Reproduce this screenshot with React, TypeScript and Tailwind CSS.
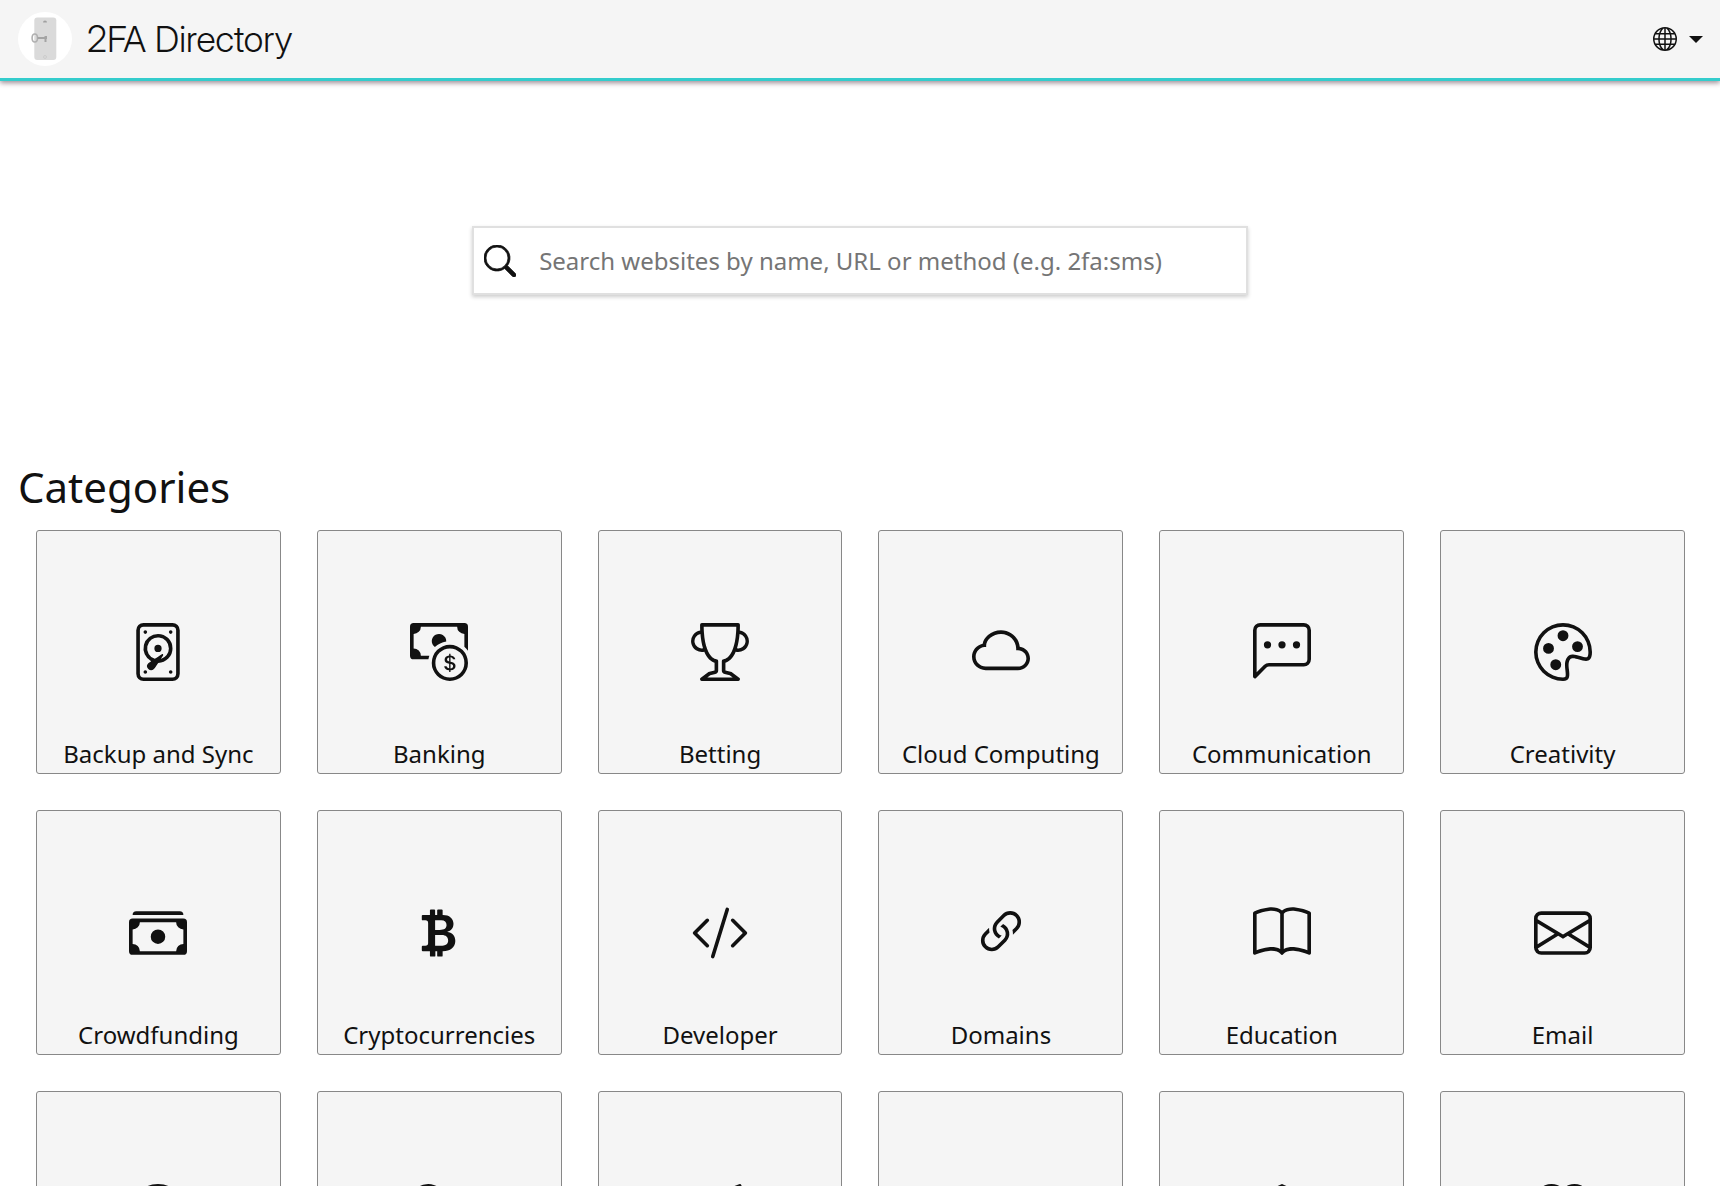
import type { IconType } from "react-icons";
import {
  BsBank,
  BsBook,
  BsCashCoin,
  BsCashStack,
  BsChatLeftDots,
  BsCloud,
  BsCodeSlash,
  BsController,
  BsCupStraw,
  BsCurrencyBitcoin,
  BsCurrencyExchange,
  BsDeviceHdd,
  BsEnvelope,
  BsGlobe,
  BsHeartPulse,
  BsLink45Deg,
  BsPalette,
  BsPlayCircle,
  BsSearch,
  BsTrophy,
} from "react-icons/bs";

type Category = { name: string; icon: IconType };

const categories: Category[] = [
  { name: "Backup and Sync", icon: BsDeviceHdd },
  { name: "Banking", icon: BsCashCoin },
  { name: "Betting", icon: BsTrophy },
  { name: "Cloud Computing", icon: BsCloud },
  { name: "Communication", icon: BsChatLeftDots },
  { name: "Creativity", icon: BsPalette },
  { name: "Crowdfunding", icon: BsCashStack },
  { name: "Cryptocurrencies", icon: BsCurrencyBitcoin },
  { name: "Developer", icon: BsCodeSlash },
  { name: "Domains", icon: BsLink45Deg },
  { name: "Education", icon: BsBook },
  { name: "Email", icon: BsEnvelope },
  { name: "Entertainment", icon: BsPlayCircle },
  { name: "Finance", icon: BsCurrencyExchange },
  { name: "Food", icon: BsCupStraw },
  { name: "Gaming", icon: BsController },
  { name: "Government", icon: BsBank },
  { name: "Health", icon: BsHeartPulse },
];

function Logo() {
  return (
    <svg viewBox="0 0 54 54" className="size-[54px]" aria-hidden="true">
      <circle cx="27" cy="27" r="27" fill="#fff" />
      <rect x="16.3" y="5.5" width="22" height="42.5" rx="3" fill="#dadada" />
      <path d="M25 10.5a2 2 0 0 1 4 0z" fill="#a0a0a0" />
      <circle cx="27" cy="45" r="1.5" fill="none" stroke="#c8c8c8" strokeWidth="0.8" />
      <ellipse cx="16.8" cy="26" rx="2.7" ry="4" fill="none" stroke="#b0b0b0" strokeWidth="1.6" />
      <path d="M19.5 26H29M27.5 26v4" fill="none" stroke="#a4a4a4" strokeWidth="2" />
      <path d="M26.5 24h2.5v2h-2.5z" fill="#a4a4a4" />
    </svg>
  );
}

function Header() {
  return (
    <header className="flex h-[81px] items-center justify-between border-b-3 border-[#3cc] bg-[#f5f5f5] pr-[17px] pl-[18px] shadow-[0_2px_5px_rgba(60,30,45,0.5)]">
      <a href="#" className="flex items-center gap-[15px]">
        <Logo />
        <span className="font-['Inter_Display','Inter',sans-serif] text-4xl font-light [font-variation-settings:'opsz'_32]">
          2FA Directory
        </span>
      </a>
      <button type="button" aria-label="Language" className="flex items-center gap-3">
        <BsGlobe className="size-6" />
        <svg viewBox="0 0 14 7" className="h-[7px] w-[14px]" fill="currentColor" aria-hidden="true">
          <path d="M0 0h14L7 7z" />
        </svg>
      </button>
    </header>
  );
}

function SearchBox() {
  return (
    <form
      role="search"
      className="mx-auto mt-[145px] mb-[147px] flex h-[69px] w-[45.1%] items-center border-2 border-[#e0e0e0] bg-white shadow-[0_2px_4px_rgba(0,0,0,0.2)]"
    >
      <label htmlFor="search" className="px-[10px]">
        <BsSearch className="size-8" stroke="currentColor" strokeWidth="0.4" aria-hidden="true" />
      </label>
      <input
        id="search"
        type="text"
        aria-label="Search websites"
        placeholder="Search websites by name, URL or method (e.g. 2fa:sms)"
        className="ml-[13px] min-w-0 flex-1 text-2xl outline-none placeholder:text-[#757575]"
      />
    </form>
  );
}

function CategoryCard({ name, icon: Icon }: Category) {
  return (
    <a
      href="#"
      className="relative flex aspect-[500/499] items-center justify-center rounded-[3px] border border-[#888] bg-[#f5f5f5]"
    >
      <Icon className="size-[58px]" />
      <span className="absolute inset-x-0 bottom-0 text-center text-2xl leading-[38px]">{name}</span>
    </a>
  );
}

export default function App() {
  return (
    <div className="bg-white pb-9 font-['Noto_Sans',sans-serif] text-[#111]">
      <Header />
      <main>
        <SearchBox />
        <h1 className="px-[18px] pt-5 text-[42px] leading-[50px]">Categories</h1>
        <div className="mt-[18px] grid grid-cols-6 gap-9 pr-[35px] pl-9">
          {categories.map((category) => (
            <CategoryCard key={category.name} {...category} />
          ))}
        </div>
      </main>
    </div>
  );
}
